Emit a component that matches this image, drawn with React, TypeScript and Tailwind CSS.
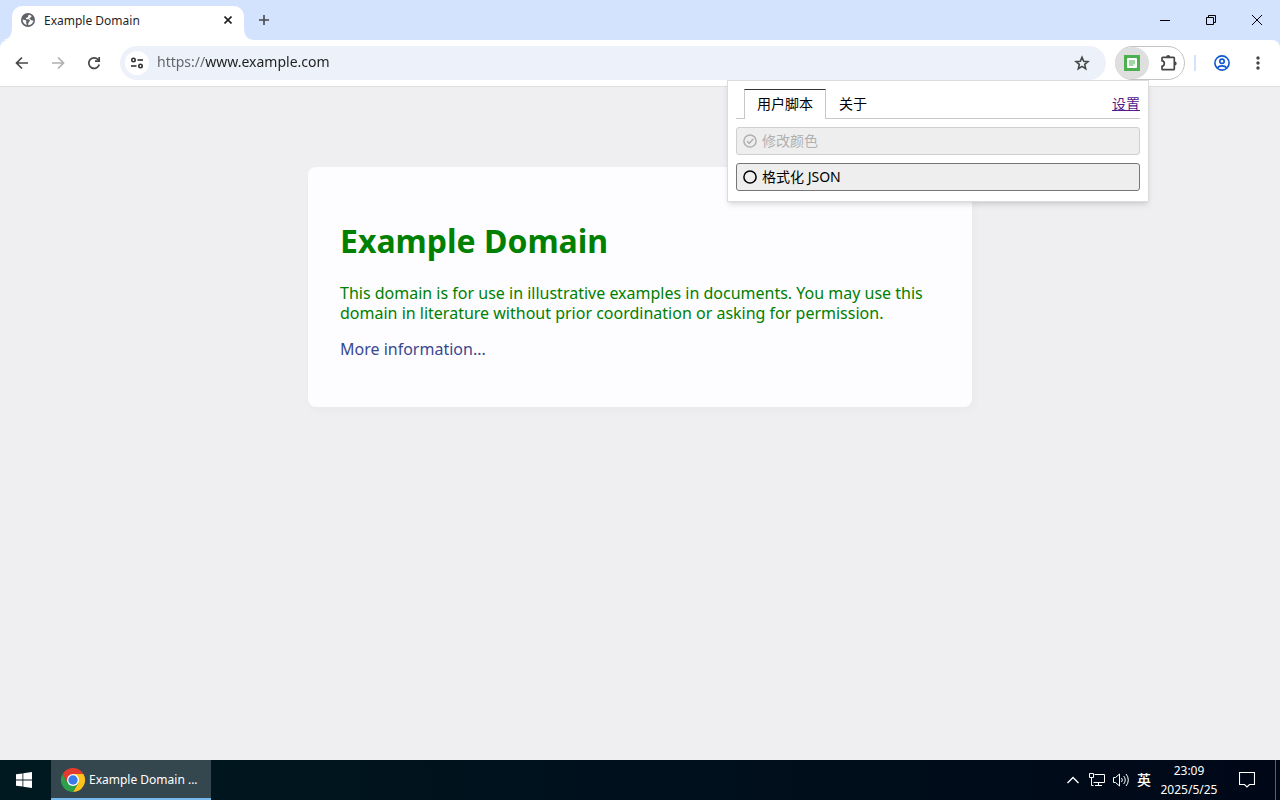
import { useState } from 'react'
import type { ReactNode } from 'react'
import { MdMoreVert } from 'react-icons/md'

function BackIcon() {
  return (
    <svg viewBox="0 0 14 14" className="size-3.5" fill="none" stroke="#474747" strokeWidth="1.700" aria-hidden="true">
      <path d="M13 7H2M7 1.500 1.500 7 7 12.500" />
    </svg>
  )
}

function ForwardIcon() {
  return (
    <svg viewBox="0 0 14 14" className="size-3.5" fill="none" stroke="#b0b0b0" strokeWidth="1.700" aria-hidden="true">
      <path d="M1 7h11M7 1.500 12.500 7 7 12.500" />
    </svg>
  )
}

function ReloadIcon() {
  return (
    <svg viewBox="0 0 14 14" className="size-3.5" fill="none" stroke="#474747" strokeWidth="1.700" aria-hidden="true">
      <path d="M12.200 8.500A5.300 5.300 0 1 1 10.900 3.400L12 4.600" />
      <path d="M12.200 1v4.200H8" />
    </svg>
  )
}

function StarIcon() {
  return (
    <svg viewBox="0 0 16 16" className="size-4" fill="none" stroke="#474747" strokeWidth="1.600" aria-hidden="true">
      <path d="M8 2.200l1.700 4 4.300.4-3.300 2.800 1 4.300L8 11.400l-3.700 2.300 1-4.300L2 6.600l4.300-.4z" />
    </svg>
  )
}

function GlobeIcon() {
  return (
    <svg viewBox="0 0 14 14" className="size-3.5 shrink-0" aria-hidden="true">
      <circle cx="7" cy="7" r="7" fill="#5f6368" />
      <path d="M8.200 1.700C7 2 7.200 3 7.200 3.600c0 .8-.8 1-1.700 1.100-.8.100-.8 1-.3 1.400.7.500 2 .1 2.900.4 1 .3.900 1.400.4 2-.7.600-1.400 1.300-1.300 3.700 3-.1 5.100-2.300 5.200-4.900-.9.500-1.900.2-2.300-.4-.5-.7-1.500-.5-1.600-1.300-.1-.9.900-.8 1.400-1.300.5-.4.4-1 .7-1.400-.7-.6-1.500-1-2.400-1.200z" fill="#fff" />
      <path d="M1.700 6.400c1.200.4 3.200.4 3.600 1.400.3.900-.4 1.500-.2 2.300.2.600.8.600.6 1.900C3.200 11.400 1.600 9 1.700 6.400z" fill="#fff" />
    </svg>
  )
}

function TuneIcon() {
  return (
    <svg viewBox="0 0 14 14" className="size-3.5" fill="none" stroke="#303134" strokeWidth="1.6" aria-hidden="true">
      <circle cx="3.500" cy="4" r="1.700" />
      <path d="M7.500 4H13" />
      <circle cx="10.500" cy="10" r="1.700" />
      <path d="M1 10h5.500" />
    </svg>
  )
}

function NoteIcon() {
  return (
    <svg viewBox="0 0 16 16" className="size-4" aria-hidden="true">
      <path d="M0 0h16v16H0z" fill="#4caf50" />
      <rect x="3" y="3" width="10" height="10" rx="1" fill="#fff" />
      <path d="M5 5h6v4L9 11H5z" fill="#a0d6a3" />
      <path d="M9 11V9h2z" fill="#d5edd6" />
    </svg>
  )
}

function PuzzleIcon() {
  return (
    <svg viewBox="0 0 18 18" className="size-[18px]" aria-hidden="true">
      <path
        d="M2.800 3.300h10.700a.8.8 0 0 1 .8.8v10.800a.8.8 0 0 1-.8.8H2.800a.8.8 0 0 1-.8-.8v-2.600c1.400-.3 2.300-1.300 2.300-2.800S3.400 7 2 6.700V4.100a.8.8 0 0 1 .8-.8z"
        fill="none"
        stroke="#474747"
        strokeWidth="1.700"
      />
      <path d="M6.200 3a2 2 0 0 1 4 0zM14.700 7.500a2 2 0 0 1 0 4z" fill="#474747" />
    </svg>
  )
}

function ProfileIcon() {
  return (
    <svg viewBox="0 0 16 16" className="size-4" fill="none" stroke="#0b57d0" strokeWidth="1.600" aria-hidden="true">
      <circle cx="8" cy="8" r="7.100" />
      <circle cx="8" cy="6.300" r="2.200" />
      <path d="M3.300 12.800C4.400 11.500 6.100 10.900 8 10.900s3.600.6 4.700 1.900" />
    </svg>
  )
}

function ChromeIcon() {
  return (
    <svg viewBox="0 0 24 24" className="size-6 shrink-0" aria-hidden="true">
      <path d="M12 12 1.600 6A12 12 0 0 1 22.400 6z" fill="#e33b2e" />
      <path d="M12 6h10.400A12 12 0 0 1 12 24l5.200-9z" fill="#fcc31e" />
      <path d="M6.800 15 1.600 6A12 12 0 0 0 12 24l5.200-9z" fill="#2da04b" />
      <path d="M1.600 6 6.800 15 12 6z" fill="#e33b2e" />
      <circle cx="12" cy="12" r="6" fill="#fff" />
      <circle cx="12" cy="12" r="4.700" fill="#3a7bea" />
    </svg>
  )
}

function ToolbarButton({ label, children }: { label: string; children: ReactNode }) {
  return (
    <button type="button" aria-label={label} className="flex size-7 shrink-0 items-center justify-center rounded-full text-[#474747]">
      {children}
    </button>
  )
}

function WindowButton({ label, children }: { label: string; children: ReactNode }) {
  return (
    <button type="button" aria-label={label} className="flex h-10 w-[46px] items-center justify-center">
      <svg viewBox="0 0 12 12" className="size-3" fill="none" stroke="#000" aria-hidden="true">
        {children}
      </svg>
    </button>
  )
}

function TabStrip() {
  return (
    <header className="flex h-10 items-end bg-[#d3e3fd]">
      <svg viewBox="0 0 12 12" className="size-3 shrink-0" aria-hidden="true">
        <path d="M12 0v12H2C8 12 12 8 12 0z" fill="#fff" />
      </svg>
      <div className="flex h-[34px] w-[232px] items-center rounded-t-[10px] bg-white pr-2 pl-[9px] pb-1.5">
        <GlobeIcon />
        <span className="ml-[9px] grow pt-0.5 text-xs text-[#1f1f1f]">Example Domain</span>
        <button type="button" aria-label="Close tab" className="flex size-4 items-center justify-center">
          <svg viewBox="0 0 8 8" className="size-2" stroke="#1f1f1f" strokeWidth="1.600" aria-hidden="true">
            <path d="M.5.5l7 7M7.500.5l-7 7" />
          </svg>
        </button>
      </div>
      <svg viewBox="0 0 12 12" className="size-3 shrink-0" aria-hidden="true">
        <path d="M0 0v12h10C4 12 0 8 0 0z" fill="#fff" />
      </svg>
      <button type="button" aria-label="New tab" className="flex h-10 w-4 items-center justify-center">
        <svg viewBox="0 0 10 10" className="size-2.5" stroke="#474747" strokeWidth="1.600" aria-hidden="true">
          <path d="M5 0v10M0 5h10" />
        </svg>
      </button>
      <div className="ml-auto flex">
        <WindowButton label="Minimize">
          <path d="M1 6.500h10" />
        </WindowButton>
        <WindowButton label="Restore">
          <path d="M1.500 3.500h7v7h-7zM3.500 3.500v-2h7v7h-2" />
        </WindowButton>
        <WindowButton label="Close">
          <path d="M1 1l10 10M11 1L1 11" />
        </WindowButton>
      </div>
    </header>
  )
}

const scripts = [
  { name: '修改颜色', checked: true, disabled: true },
  { name: '格式化 JSON', checked: false, disabled: false },
]

function ScriptPopup() {
  const [items, setItems] = useState(scripts)

  const toggle = (name: string) => {
    setItems(items.map((item) => (item.name === name ? { ...item, checked: !item.checked } : item)))
  }

  return (
    <div className="absolute top-[33px] right-0 z-10 w-[422px] border border-[#dcdcdc] bg-white p-2 pb-2.5 text-sm text-black shadow-md">
      <div className="flex h-[30px] items-stretch">
        <div className="w-2 border-b border-[#c8c8c8]" />
        <div role="tablist" className="flex">
          <button type="button" role="tab" aria-selected="true" className="border-x border-t border-x-[#c8c8c8] border-t-[#333] px-3 pb-px">
            用户脚本
          </button>
          <button type="button" role="tab" aria-selected="false" className="border-b border-[#c8c8c8] px-[13px]">
            关于
          </button>
        </div>
        <div className="flex grow items-center justify-end border-b border-[#c8c8c8]">
          <a href="#settings" className="text-[#551a8b] underline">设置</a>
        </div>
      </div>
      <div className="mt-2 flex flex-col gap-2">
        {items.map((item) => (
          <button
            key={item.name}
            type="button"
            disabled={item.disabled}
            aria-pressed={item.checked}
            onClick={() => toggle(item.name)}
            className="flex h-7 items-center gap-[5px] rounded-[3px] border border-[#767676] bg-[#eee] px-1.5 disabled:border-[#cfcfcf] disabled:text-[#b0b0b0]"
          >
            <svg viewBox="0 0 14 14" className="size-3.5" fill="none" stroke="currentColor" strokeWidth="1.500" aria-hidden="true">
              <circle cx="7" cy="7" r="6.100" />
              {item.checked && <path d="M4 7.200l2.200 2.200L10.200 5" />}
            </svg>
            {item.name}
          </button>
        ))}
      </div>
    </div>
  )
}

function Toolbar() {
  return (
    <div className="bg-[#d3e3fd]">
      <nav className="flex h-[47px] items-center rounded-t-lg border-b border-[#dedfe1] bg-white px-2">
        <div className="flex gap-2">
          <ToolbarButton label="Back"><BackIcon /></ToolbarButton>
          <ToolbarButton label="Forward"><ForwardIcon /></ToolbarButton>
          <ToolbarButton label="Reload"><ReloadIcon /></ToolbarButton>
        </div>
        <div className="ml-3 flex h-[34px] grow items-center rounded-full bg-[#ecf1fa] pr-2.5 pl-[5px]">
          <button type="button" aria-label="Site information" className="flex size-6 items-center justify-center rounded-full bg-white">
            <TuneIcon />
          </button>
          {/* the scheme is drawn lighter than the host */}
          <input
            type="text"
            aria-label="Address"
            defaultValue="https://www.example.com"
            className="ml-2 min-w-0 grow bg-[linear-gradient(90deg,#5f6368_48px,#1f1f1f_48px)] bg-clip-text pb-0.5 text-sm text-transparent caret-black outline-none"
          />
          <ToolbarButton label="Bookmark this page"><StarIcon /></ToolbarButton>
        </div>
        <div className="ml-[9px] flex h-[34px] w-[70px] items-center rounded-full border border-[#c4c4c4]">
          <div className="relative -ml-px">
            <button type="button" aria-label="User scripts" className="flex h-8 w-[34px] items-center justify-center rounded-full bg-[#dfdfdf]">
              <NoteIcon />
            </button>
            <ScriptPopup />
          </div>
          <button type="button" aria-label="Extensions" className="flex grow items-center justify-center pl-1">
            <PuzzleIcon />
          </button>
        </div>
        <div className="mx-[9px] h-4 w-0.5 bg-[#d3e3fd]" />
        <div className="ml-[3px] flex gap-2">
          <ToolbarButton label="Profile"><ProfileIcon /></ToolbarButton>
          <ToolbarButton label="Menu"><MdMoreVert className="size-5" /></ToolbarButton>
        </div>
      </nav>
    </div>
  )
}

function TrayIcon({ label, children }: { label: string; children: ReactNode }) {
  return (
    <button type="button" aria-label={label} className="flex w-6 items-center justify-center">
      <svg viewBox="0 0 16 16" className="size-4" fill="none" stroke="#fff" aria-hidden="true">
        {children}
      </svg>
    </button>
  )
}

function Taskbar() {
  return (
    <footer className="flex h-10 items-stretch bg-linear-to-r from-[#001920] to-[#000818] text-white">
      <button type="button" aria-label="Start" className="flex w-12 items-center justify-center">
        <svg viewBox="0 0 16 16" className="size-4" fill="#fff" aria-hidden="true">
          <path d="M0 2.300 6.500 1.400v6.200H0zM7.300 1.200 16 0v7.600H7.300zM0 8.400h6.500v6.200L0 13.700zM7.300 8.400H16V16l-8.700-1.200z" />
        </svg>
      </button>
      <button type="button" className="ml-[3px] flex w-40 items-center gap-1 border-b-2 border-[#76b9ed] bg-[#34474f] pt-0.5 pl-2.5 text-xs">
        <ChromeIcon />
        Example Domain ...
      </button>
      <div className="ml-auto flex items-stretch text-xs">
        <TrayIcon label="Show hidden icons">
          <path d="M2.500 11 8 5.500l5.500 5.500" strokeWidth="1.400" />
        </TrayIcon>
        <TrayIcon label="Network">
          <path d="M5.500 2.500h10v8h-11M9.500 10.500v3M6 13.500h7M.5 1.500h4v4h-4zM2.500 5.500v8h2" />
        </TrayIcon>
        <TrayIcon label="Volume">
          <path d="M.5 5.500h2L6.500 2v12L2.500 10.500h-2zM8.500 6a3 3 0 0 1 0 4M10.700 4a6 6 0 0 1 0 8M13 2a9 9 0 0 1 0 12" />
        </TrayIcon>
        <button type="button" className="w-[22px] text-sm font-medium">英</button>
        <button type="button" className="w-[68px] text-center leading-[19px]">
          <time dateTime="2025-05-25T23:09">
            23:09
            <br />
            2025/5/25
          </time>
        </button>
        <button type="button" aria-label="Notifications" className="mr-1 flex w-12 items-center justify-center">
          <svg viewBox="0 0 16 16" className="size-4" fill="none" stroke="#fff" strokeWidth="1.100" aria-hidden="true">
            <path d="M.5.5h15v12h-5L8 15l-2.500-2.500h-5z" />
          </svg>
        </button>
        <button type="button" aria-label="Show desktop" className="w-[5px] border-l border-[#5a616b]" />
      </div>
    </footer>
  )
}

export default function App() {
  return (
    <div className="flex min-h-screen flex-col bg-[#efeff1] font-['Noto_Sans','Noto_Sans_CJK_SC',sans-serif]">
      <TabStrip />
      <Toolbar />
      <main className="grow px-4 py-20">
        <article className="mx-auto max-w-[664px] rounded-lg bg-[#fdfdff] px-8 pt-[54px] pb-12 text-base leading-5 shadow-[2px_3px_7px_2px_rgba(0,0,0,0.02)]">
          <h1 className="text-[32px] leading-10 font-bold text-[#008000]">Example Domain</h1>
          <p className="mt-[22px] text-[#008000]">
            This domain is for use in illustrative examples in documents. You may use this domain in literature without
            prior coordination or asking for permission.
          </p>
          <p className="mt-4">
            <a href="https://www.iana.org/domains/example" className="text-[#38488f]">More information...</a>
          </p>
        </article>
      </main>
      <Taskbar />
    </div>
  )
}
